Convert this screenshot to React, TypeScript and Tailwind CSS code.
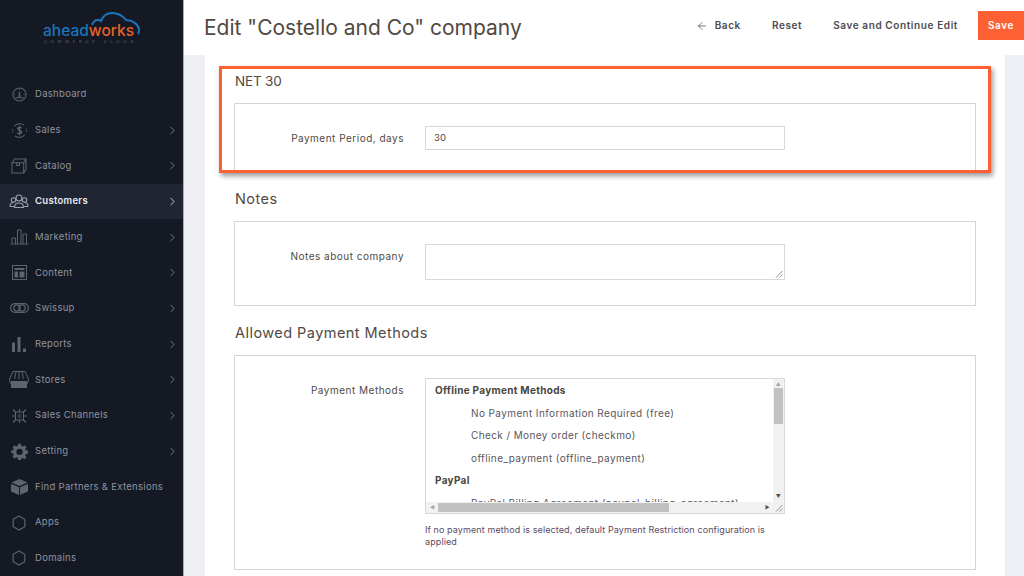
import { ArrowLeft, ChevronRight } from "lucide-react";

const font = "font-['Inter','Liberation_Sans',sans-serif]";

function DashboardIcon() {
  return (
    <svg viewBox="0 0 16 16" className="h-[15px] w-[15px]" fill="none" stroke="currentColor" strokeWidth="1.1">
      <circle cx="8" cy="8" r="7" />
      <path d="M8 2.5v1M2.5 8h1M12.5 8h1M8 5l.6 6.5H7.4L8 5z" />
      <path d="M3.5 11.5h3M9.5 11.5h3" />
    </svg>
  );
}

function SalesIcon() {
  return (
    <svg viewBox="0 0 18 18" className="h-[17px] w-[17px]" fill="none" stroke="currentColor" strokeWidth="1.1">
      <path d="M3.5 4.5A7.5 7.5 0 0 1 14 3.4M14.500 13.500A7.500 7.500 0 0 1 4 14.600" />
      <path d="M1.700 8v3.500M16.300 10V6.500" strokeDasharray="1.500 1.200" />
      <path d="M11.300 6.500C10.800 5.400 7 5 7 7c0 2.200 4.300 1.500 4.300 3.900 0 2.100-3.900 1.700-4.600.4M9 4v10" strokeWidth="1.300" />
    </svg>
  );
}

function CatalogIcon() {
  return (
    <svg viewBox="0 0 17 17" className="h-4 w-4" fill="none" stroke="currentColor" strokeWidth="1.1">
      <path d="M1 5h12.500v11H1zM1 5l3-4h12v11l-2.500 4M13.500 5 16 1" />
      <path d="M6 5v3h3V5" />
    </svg>
  );
}

function CustomersIcon() {
  return (
    <svg viewBox="0 0 20 15" className="h-[15px] w-[20px]" fill="none" stroke="currentColor" strokeWidth="1.100">
      <circle cx="10" cy="4" r="3" />
      <circle cx="4.500" cy="6" r="2.200" />
      <circle cx="15.500" cy="6" r="2.200" />
      <path d="M5.500 13.500c0-6 9-6 9 0zM1 12.500c0-3 1.500-4 3.500-4M19 12.500c0-3-1.500-4-3.500-4M1 12.500h4M15 12.500h4" />
    </svg>
  );
}

function MarketingIcon() {
  return (
    <svg viewBox="0 0 19 16" className="h-4 w-[19px]" fill="none" stroke="currentColor" strokeWidth="1">
      <path d="M2 14.500V9h3.500v5.500M7.500 14.500V1H11v13.500M13 14.500V5h3.500v9.500M.5 15h18" />
    </svg>
  );
}

function ContentIcon() {
  return (
    <svg viewBox="0 0 15 15" className="h-[15px] w-[15px]">
      <rect x=".5" y=".5" width="14" height="14" fill="none" stroke="currentColor" />
      <path d="M2.500 3h10v2h-10zM2.500 6.500h3.500V12.500H2.500zM7.500 6.500h5V12.500h-5z" fill="currentColor" />
    </svg>
  );
}

function SwissupIcon() {
  return (
    <svg viewBox="0 0 19 10" className="h-[10px] w-[19px]" fill="none" stroke="currentColor" strokeWidth="1.200">
      <rect x=".6" y=".6" width="17.800" height="8.800" rx="4.400" />
      <circle cx="7" cy="5" r="3.200" />
      <circle cx="12" cy="5" r="3.200" />
    </svg>
  );
}

function ReportsIcon() {
  return (
    <svg viewBox="0 0 15 15" className="h-[15px] w-[15px]" fill="currentColor">
      <path d="M0 5.500h3V15H0zM5.500 0h3v15h-3zM11 11.500h3V15h-3z" />
    </svg>
  );
}

function StoresIcon() {
  return (
    <svg viewBox="0 0 20 17" className="h-[17px] w-5">
      <path d="M4 .5h12l3.500 7.500a2 2 0 0 1-19 0z" fill="none" stroke="currentColor" />
      <path d="M7 1 5.500 8M10 1v7M13 1l1.500 7" stroke="currentColor" />
      <path d="M2 10h16v7H2z" fill="currentColor" />
    </svg>
  );
}

function ChannelsIcon() {
  return (
    <svg viewBox="0 0 17 16" className="h-4 w-[17px]" fill="none" stroke="currentColor" strokeWidth="1.100">
      <path d="M4.500 4h8v8h-8zM4.500 4 2 1.500M12.500 4 15 1.500M4.500 12 2 14.500M12.500 12 15 14.500M8.500 4V1M8.500 15v-3M4.500 8H1M16 8h-3.500" />
      <path d="M6.500 6h4v4h-4z" fill="currentColor" stroke="none" opacity=".4" />
    </svg>
  );
}

function SettingIcon() {
  return (
    <svg viewBox="0 0 24 24" className="h-[17px] w-[17px]" fill="currentColor">
      <path
        fillRule="evenodd"
        d="M10 1h4l.6 3.100 1.800.8L19 3.200 21.800 6l-1.700 2.600.8 1.800L24 11v4l-3.100.6-.8 1.800 1.700 2.600-2.800 2.800-2.600-1.700-1.800.8L14 24h-4l-.6-3.100-1.800-.8L5 21.800 2.200 19l1.700-2.600-.8-1.800L0 14v-3l3.100-.6.800-1.800L2.200 6 5 3.200l2.600 1.700 1.800-.8zM12 8a4.500 4.500 0 1 0 0 9 4.500 4.500 0 0 0 0-9z"
      />
    </svg>
  );
}

function PartnersIcon() {
  return (
    <svg viewBox="0 0 17 16" className="h-4 w-[17px]" fill="currentColor">
      <path d="M8.500 0 16.500 3.500 8.500 7 .5 3.500z" />
      <path d="M0 4.700 8 8.200V16L0 12.500zM17 4.700 9 8.200V16l8-3.500z" />
    </svg>
  );
}

function HexIcon() {
  return (
    <svg viewBox="0 0 14 16" className="h-4 w-[14px]" fill="none" stroke="currentColor" strokeWidth="1.200">
      <path d="M7 1l5.800 3.300v7.400L7 15l-5.800-3.300V4.300z" />
    </svg>
  );
}

const menu = [
  { label: "Dashboard", icon: <DashboardIcon /> },
  { label: "Sales", icon: <SalesIcon />, more: true },
  { label: "Catalog", icon: <CatalogIcon />, more: true },
  { label: "Customers", icon: <CustomersIcon />, more: true, active: true },
  { label: "Marketing", icon: <MarketingIcon />, more: true },
  { label: "Content", icon: <ContentIcon />, more: true },
  { label: "Swissup", icon: <SwissupIcon />, more: true },
  { label: "Reports", icon: <ReportsIcon />, more: true },
  { label: "Stores", icon: <StoresIcon />, more: true },
  { label: "Sales Channels", icon: <ChannelsIcon />, more: true },
  { label: "Setting", icon: <SettingIcon />, more: true },
  { label: "Find Partners & Extensions", icon: <PartnersIcon /> },
  { label: "Apps", icon: <HexIcon /> },
  { label: "Domains", icon: <HexIcon /> },
];

function Logo() {
  return (
    <div className="relative h-[36px] w-[100px]">
      <svg viewBox="0 0 100 30" className="absolute left-0 top-0 h-[30px] w-[100px]" fill="none" stroke="#1b75bc" strokeWidth="2">
        <path d="M49 14c1-3 3-5 6-5 1 0 2 0 3 1 2-5 6-8 11-8 6 0 11 3 14 7 6 0 12 4 13 9 0 2 0 4-1 5" />
      </svg>
      <div className="absolute left-0 top-[12px] flex text-[15.500px] font-medium leading-[16px]">
        <span className="text-[#1b75bc]">ahead</span>
        <span className="text-[#e8622a]">works</span>
      </div>
      <div className="absolute left-[1px] top-[28px] whitespace-nowrap text-[4px] leading-[5px] tracking-[3.900px] text-[#5f6673]">
        COMMERCE CLOUD
      </div>
    </div>
  );
}

function Sidebar() {
  return (
    <aside className="flex h-[576px] w-[184px] shrink-0 flex-col overflow-hidden border-r border-[#a9adb6] bg-[#141923]">
      <div className="flex h-[76.500px] shrink-0 justify-center pl-[3px] pt-[11px]">
        <Logo />
      </div>
      <nav className="flex flex-col">
        {menu.map((item) => (
          <div
            key={item.label}
            className={`flex h-[35.700px] shrink-0 items-center pl-[9px] pr-[4px] text-[9.500px] tracking-[0.3px] ${
              item.active ? "bg-[#1f2533] font-semibold text-[#e6e8ed]" : "font-normal text-[#8f94a0]"
            }`}
          >
            <span className={`flex w-[20px] items-center justify-center ${item.active ? "text-[#9da2ad]" : "text-[#5d636f]"}`}>
              {item.icon}
            </span>
            <span className="ml-[6px] flex-1 whitespace-nowrap">{item.label}</span>
            {item.more && <ChevronRight className={`h-[13px] w-[13px] ${item.active ? "text-[#e6e8ed]" : "text-[#8a8f9b]"}`} strokeWidth={1.500} />}
          </div>
        ))}
      </nav>
    </aside>
  );
}

function Header() {
  return (
    <header className="flex h-[55px] shrink-0 items-start bg-white pl-[20px]">
      <h1 className="mt-[13px] flex-1 whitespace-nowrap text-[21px] font-normal leading-[30px] text-[#514943]">
        Edit "Costello and Co" company
      </h1>
      <div className="mt-[11px] flex items-center text-[10px] font-semibold tracking-[0.6px] text-[#4b4b50]">
        <ArrowLeft className="h-[12px] w-[12px]" strokeWidth={1.500} />
        <span className="ml-[7px]">Back</span>
        <span className="ml-[31px]">Reset</span>
        <span className="ml-[31px]">Save and Continue Edit</span>
        <button className="ml-[20px] h-[29px] w-[46px] bg-[#fd6133] text-[10px] font-semibold tracking-[0.6px] text-white">Save</button>
      </div>
    </header>
  );
}

function Section({
  title,
  children,
  className,
  titleClass = "text-[14.500px] tracking-[0.45px]",
}: {
  title: string;
  children: React.ReactNode;
  className: string;
  titleClass?: string;
}) {
  return (
    <section>
      <h2 className={`pl-[1px] font-normal leading-[20px] text-[#514943] ${titleClass}`}>{title}</h2>
      <div className={`mt-[12px] flex border border-[#d3d5da] bg-white ${className}`}>{children}</div>
    </section>
  );
}

function Label({ children }: { children: React.ReactNode }) {
  return <div className="w-[169px] shrink-0 whitespace-nowrap text-right text-[10px] font-normal leading-[14px] tracking-[0.5px] text-[#514943]">{children}</div>;
}

function ResizeGrip() {
  return (
    <svg viewBox="0 0 8 8" className="absolute bottom-[1px] right-[1px] h-2 w-2" stroke="#777" strokeWidth=".8">
      <path d="M1 7.500 7.500 1M4.500 7.500l3-3" />
    </svg>
  );
}

function PaymentList() {
  return (
    <div className="relative h-[136px] w-[360px] overflow-hidden border border-[#d6d8df] bg-white text-[10px] leading-[22.500px] tracking-[0.4px] text-[#5a5560]">
      <div className="whitespace-nowrap pl-[9px]">
        <div className="font-bold tracking-[0.3px] text-[#4a4540]">Offline Payment Methods</div>
        <div className="pl-[36px]">No Payment Information Required (free)</div>
        <div className="pl-[36px]">Check / Money order (checkmo)</div>
        <div className="pl-[36px]">offline_payment (offline_payment)</div>
        <div className="font-bold tracking-[0.3px] text-[#4a4540]">PayPal</div>
        <div className="pl-[36px]">PayPal Billing Agreement (paypal_billing_agreement)</div>
      </div>
      {/* native looking scrollbars */}
      <div className="absolute bottom-0 right-0 top-0 flex w-[11px] flex-col items-center bg-[#f1f1f1]">
        <span className="mt-[3px] text-[5px] leading-[5px] text-[#a3a3a3]">▲</span>
        <div className="mt-[1px] h-[36px] w-[9px] bg-[#c1c1c1]" />
        <span className="mb-[14px] mt-auto text-[5px] leading-[5px] text-[#505050]">▼</span>
      </div>
      <div className="absolute bottom-0 left-0 right-0 flex h-[11px] items-center bg-[#f1f1f1]">
        <span className="ml-[4px] text-[5px] leading-[5px] text-[#a3a3a3]">◀</span>
        <div className="ml-[3px] h-[9px] w-[231px] shrink-0 bg-[#c1c1c1]" />
        <span className="ml-auto mr-[14px] text-[5px] leading-[5px] text-[#505050]">▶</span>
      </div>
      <ResizeGrip />
    </div>
  );
}

function Main() {
  return (
    <div className="flex min-w-0 flex-1 flex-col bg-[#eef0f5]">
      <Header />
      <main className="relative ml-[21px] mr-[19px] flex-1 overflow-hidden bg-white px-[29px]">
        <div className="flex flex-col gap-[17px] pt-[16px]">
          <Section title="NET 30" titleClass="text-[13.500px] tracking-[-0.2px]" className="h-[69px] items-start pt-[22px]">
            <div className="mt-[5px]"><Label>Payment Period, days</Label></div>
            <div className="ml-[21px] flex h-[24px] w-[360px] items-center border border-[#d6d8df] pl-[8px] text-[9.500px] tracking-[0.2px] text-[#514943]">30</div>
          </Section>
          <Section title="Notes" className="h-[85px] items-start pt-[22px]">
            <div className="mt-[5px]"><Label>Notes about company</Label></div>
            <div className="relative ml-[21px] h-[36px] w-[360px] border border-[#d6d8df]">
              <ResizeGrip />
            </div>
          </Section>
          <Section title="Allowed Payment Methods" className="h-[215px] items-start pt-[22px]">
            <div className="mt-[5px]"><Label>Payment Methods</Label></div>
            <div className="ml-[21px] w-[360px]">
              <PaymentList />
              <p className="mt-[10px] text-[9px] leading-[11.500px] tracking-[0.1px] text-[#5b4a63]">
                If no payment method is selected, default Payment Restriction configuration is applied
              </p>
            </div>
          </Section>
        </div>
        {/* the highlight drawn over the screenshot */}
        <div className="absolute left-[14px] top-[11px] h-[107px] w-[772px] border-[3px] border-[#fd6133] shadow-[2px_3px_5px_rgba(0,0,0,0.4)]" />
      </main>
    </div>
  );
}

export default function App() {
  return (
    <div className={`flex h-[576px] w-[1024px] overflow-hidden ${font}`}>
      <Sidebar />
      <Main />
    </div>
  );
}
